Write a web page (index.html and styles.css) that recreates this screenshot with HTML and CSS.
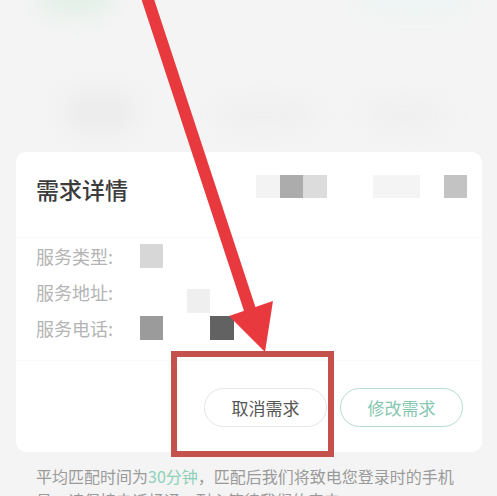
FILE: index.html
```html
<html>
<head>
<meta charset="utf-8">
<link rel="stylesheet" href="styles.css">
</head>
<body>

<div class="page">
	<div class="top-area">
		<div class="blob blob-green"></div>
		<div class="blob blob-cyan"></div>
		<div class="blob blob-gray-a"></div>
		<div class="blob blob-gray-b"></div>
		<div class="blob blob-gray-c"></div>
	</div>

	<div class="card">
		<div class="card-header">
			<div class="card-title">需求详情</div>
			<div class="mosaic mosaic-title">
				<span class="cell c-f2"></span>
				<span class="cell c-ab"></span>
				<span class="cell c-dc"></span>
				<span class="cell"></span>
				<span class="cell"></span>
				<span class="cell c-f3"></span>
				<span class="cell c-f3"></span>
				<span class="cell"></span>
				<span class="cell c-c2"></span>
			</div>
		</div>

		<div class="card-body">
			<div class="info-row">
				<div class="info-label">服务类型:</div>
				<div class="mosaic">
					<span class="cell c-d6"></span>
				</div>
			</div>
			<div class="info-row">
				<div class="info-label">服务地址:</div>
				<div class="mosaic mosaic-low">
					<span class="cell"></span>
					<span class="cell"></span>
					<span class="cell c-ee"></span>
				</div>
			</div>
			<div class="info-row">
				<div class="info-label">服务电话:</div>
				<div class="mosaic">
					<span class="cell c-9a"></span>
					<span class="cell"></span>
					<span class="cell"></span>
					<span class="cell c-60"></span>
				</div>
			</div>
		</div>

		<div class="card-footer">
			<button class="btn btn-cancel">取消需求</button>
			<button class="btn btn-edit">修改需求</button>
		</div>
	</div>

	<div class="notice">
		平均匹配时间为<span class="notice-green">30分钟</span>，匹配后我们将致电您登录时的手机号，请保持电话畅通，耐心等待我们的来电
	</div>
</div>

<!-- annotation overlays -->
<div class="mark-box"></div>
<svg class="mark-arrow" width="497" height="496" viewBox="0 0 497 496">
	<line x1="146" y1="-6" x2="254" y2="322" stroke="#e7393e" stroke-width="12"/>
	<polygon points="265,352 273,301 229,316" fill="#e7393e"/>
</svg>

</body>
</html>
```

FILE: styles.css
```css
body {
    margin: 0;
    background: #f4f4f4;
    font-family: "Noto Sans CJK SC", "Noto Sans", sans-serif;
    overflow: hidden;
}

.page {
    width: 497px;
    height: 496px;
    overflow: hidden;
}

.top-area {
    height: 152px;
    position: relative;
    overflow: hidden;
}
.blob {
    position: absolute;
    filter: blur(14px);
    border-radius: 20px;
}
.blob-green {
    left: 40px;
    top: -25px;
    width: 70px;
    height: 36px;
    background: #dcefe3;
}
.blob-cyan {
    left: 360px;
    top: -25px;
    width: 110px;
    height: 34px;
    background: #eaf5f3;
}
.blob-gray-a {
    left: 65px;
    top: 95px;
    width: 70px;
    height: 34px;
    background: #e9eae9;
}
.blob-gray-b {
    left: 215px;
    top: 104px;
    width: 100px;
    height: 22px;
    background: #eeeeee;
}
.blob-gray-c {
    left: 365px;
    top: 104px;
    width: 80px;
    height: 22px;
    background: #eeeeee;
}

.card {
    margin: 0 15px 0 16px;
    background: #fff;
    border-radius: 10px;
}

.card-header {
    height: 86px;
    box-sizing: border-box;
    padding: 21px 15px 0 20px;
    display: flex;
    align-items: flex-start;
    border-bottom: 1px solid #fafafa;
}
.card-title {
    font-size: 23px;
    font-weight: 500;
    line-height: 32px;
    color: #3c3c3c;
}

.mosaic {
    display: grid;
    grid-template-columns: repeat(9, 23.4px);
    grid-auto-rows: 23.4px;
}
.mosaic-title {
    margin-left: auto;
    margin-top: 2px;
}
.mosaic-low {
    margin-top: 18px;
}
.cell.c-f2 { background: #f3f3f3; }
.cell.c-ab { background: #acacac; }
.cell.c-dc { background: #dcdcdc; }
.cell.c-f3 { background: #f4f4f4; }
.cell.c-c2 { background: #c3c3c3; }
.cell.c-d6 { background: #d7d7d7; }
.cell.c-ee { background: #efefef; }
.cell.c-9a { background: #9b9b9b; }
.cell.c-60 { background: #626262; }

.card-body {
    padding: 0 0 14px 20px;
    border-bottom: 1px solid #fafafa;
}
.info-row {
    height: 36px;
    display: flex;
    align-items: center;
}
.info-label {
    width: 104px;
    font-size: 18px;
    color: #b4b4b4;
}

.card-footer {
    display: flex;
    justify-content: flex-end;
    gap: 13px;
    padding: 27px 19px 25px 0;
}
.btn {
    width: 123px;
    height: 39px;
    border-radius: 20px;
    background: #fff;
    font-family: inherit;
    font-size: 17px;
    padding: 0;
}
.btn-cancel {
    border: 1px solid #e6e6e6;
    color: #555;
}
.btn-edit {
    border: 1px solid #b5dccd;
    color: #86c7b0;
}

.notice {
    padding: 12px 42px 0 36px;
    font-size: 16px;
    line-height: 24px;
    color: #9a9a9a;
}
.notice-green {
    color: #8dd0b8;
}

.mark-box {
    position: absolute;
    left: 171px;
    top: 351px;
    width: 163px;
    height: 106px;
    box-sizing: border-box;
    border: 6px solid #c4514c;
}
.mark-arrow {
    position: absolute;
    left: 0;
    top: 0;
}
```
